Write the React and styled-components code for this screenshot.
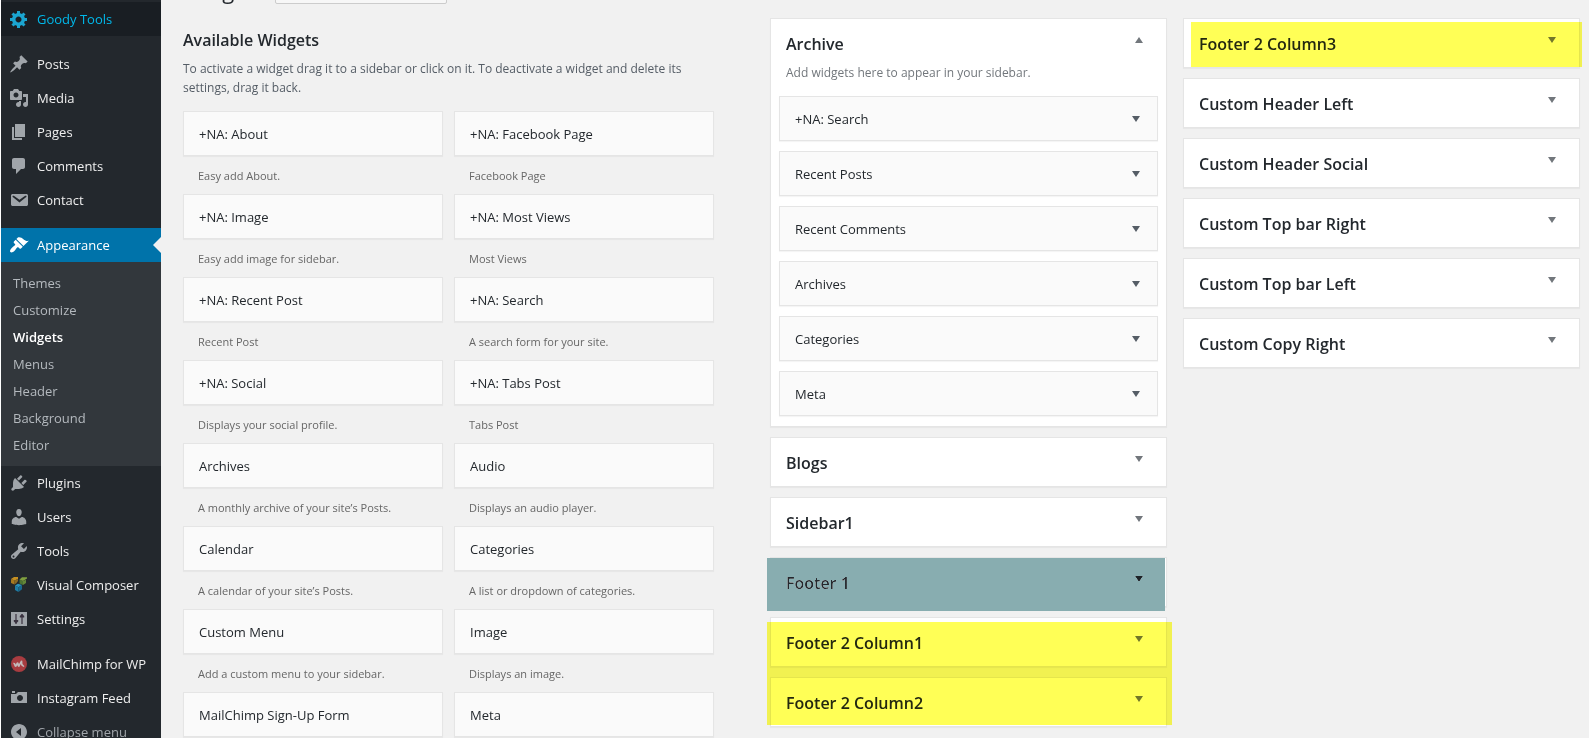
import React from "react";
import styled, { createGlobalStyle, css } from "styled-components";

const GlobalStyle = createGlobalStyle`
  *, *::before, *::after { box-sizing: border-box; }
  html, body { margin: 0; padding: 0; }
  body {
    background: #f1f1f1;
    color: #23282d;
    font-family: "Open Sans", "Noto Sans", sans-serif;
    font-size: 13px;
    line-height: 19px;
    overflow: hidden;
  }
  h1, h2, h3, p, ul { margin: 0; padding: 0; }
  ul { list-style: none; }
  button { font-family: inherit; }
`;

const Page = styled.div`
  display: flex;
  height: 100vh;
  overflow: hidden;
`;

/* ---------- Admin menu ---------- */

const Menu = styled.nav`
  flex: 0 0 161px;
  padding-top: 2px;
  background: #23282d;
  border-left: 1px solid #fff;
`;

const MenuGroup = styled.ul`
  margin-bottom: 11px;
`;

const itemLook = css`
  position: relative;
  display: flex;
  align-items: center;
  gap: 8px;
  width: 100%;
  height: 34px;
  padding: 0 0 0 8px;
  border: 0;
  font-size: 13px;
  line-height: 18px;
  text-align: left;
  text-decoration: none;
  white-space: nowrap;
`;

const tones = {
  normal: css`background: transparent; color: #eee; svg { color: #a0a5aa; }`,
  hover: css`background: #191e23; color: #00b9eb; svg { color: #1ba5d0; }`,
  current: css`
    background: #0073aa;
    color: #fff;
    svg { color: #fff; }
    &::after {
      content: "";
      position: absolute;
      right: 0;
      border: 8px solid transparent;
      border-right-color: #f1f1f1;
    }
  `,
};

const MenuLink = styled.a`
  ${itemLook}
  ${(p) => tones[p.$tone || "normal"]}
`;

const CollapseButton = styled.button`
  ${itemLook}
  background: transparent;
  color: #a0a5aa;
  cursor: pointer;
`;

const Icon = styled.svg`
  flex: none;
  width: 20px;
  height: 20px;
  fill: currentColor;
`;

const SubMenu = styled.ul`
  padding: 8px 0 7px;
  background: #32373c;
`;

const SubLink = styled.a`
  display: block;
  padding: 4px 12px;
  color: ${(p) => (p.$current ? "#fff" : "#b4b9be")};
  font-size: 13px;
  font-weight: ${(p) => (p.$current ? 600 : 400)};
  line-height: 19px;
  text-decoration: none;
`;

/* ---------- Content ---------- */

const Content = styled.main`
  flex: 1;
  min-width: 0;
  padding: 0 9px 0 22px;
`;

const TitleBar = styled.header`
  display: flex;
  align-items: flex-end;
  gap: 10px;
  height: 29px;
  margin-top: -25px;
`;

const PageTitle = styled.h1`
  font-size: 22px;
  font-weight: 400;
  line-height: 28px;
`;

const PreviewButton = styled.button`
  width: 172px;
  height: 28px;
  border: 1px solid #ccc;
  border-radius: 2px;
  background: #f7f7f7;
  color: #0073aa;
  font-size: 12px;
  font-weight: 600;
  white-space: nowrap;
`;

const Columns = styled.div`
  display: grid;
  grid-template-columns: minmax(0, 531fr) minmax(0, 810fr);
  gap: 56px;
  margin-top: 14px;
`;

const Available = styled.section`
  padding-top: 12px;
`;

const SectionTitle = styled.h2`
  font-size: 16px;
  font-weight: 600;
  line-height: 20px;
`;

const Intro = styled.p`
  margin: 9px 0 14px;
  color: #555d66;
  font-size: 12px;
`;

const WidgetGrid = styled.div`
  display: grid;
  grid-template-columns: 1fr 1fr;
  column-gap: 11px;
`;

const WidgetTile = styled.article`
  height: 83px;
`;

const WidgetBar = styled.div`
  display: flex;
  align-items: center;
  justify-content: space-between;
  height: 45px;
  padding: 1px 17px 0 15px;
  border: 1px solid #e5e5e5;
  background: #fafafa;
  box-shadow: 0 1px 1px rgba(0, 0, 0, 0.04);
`;

const WidgetName = styled.h3`
  font-size: 13px;
  font-weight: 500;
  line-height: 20px;
  white-space: nowrap;
`;

const WidgetNote = styled.p`
  padding: 10px 15px 0;
  color: #666;
  font-size: 11px;
`;

const SidebarColumns = styled.div`
  display: grid;
  grid-template-columns: 1fr 1fr;
  align-items: start;
  gap: 16px;
`;

const SidebarColumn = styled.div`
  display: flex;
  flex-direction: column;
  gap: 10px;
`;

const Panel = styled.section`
  border: 1px solid #e5e5e5;
  background: #fff;
  box-shadow: 0 1px 1px rgba(0, 0, 0, 0.04);
`;

const PanelHead = styled.div`
  display: flex;
  justify-content: space-between;
  height: 48px;
  padding: 15px 23px 0 15px;
`;

const PanelTitle = styled.h2`
  font-size: 16px;
  font-weight: 600;
  line-height: 20px;
  white-space: nowrap;
`;

const PanelBody = styled.div`
  display: flex;
  flex-direction: column;
  gap: 10px;
  padding: 0 8px 10px;
`;

const PanelNote = styled.p`
  margin: -4px 7px 4px;
  color: #72777c;
  font-size: 12px;
`;

const Toggle = styled.button`
  display: flex;
  align-items: center;
  align-self: ${(p) => (p.$top ? "flex-start" : "center")};
  height: ${(p) => (p.$top ? 12 : 10)}px;
  padding: 0;
  border: 0;
  background: transparent;
  color: ${(p) => p.$color || "#72777c"};
  cursor: pointer;

  svg {
    width: 8px;
    height: 6px;
    fill: currentColor;
  }
`;

/* Marker-pen tint laid over one or more panels */
const Marked = styled.div`
  position: relative;
  display: flex;
  flex-direction: column;
  gap: 10px;

  &::after {
    content: "";
    position: absolute;
    inset: ${(p) => p.$inset};
    background: ${(p) => p.$tint};
    mix-blend-mode: ${(p) => p.$blend || "multiply"};
    pointer-events: none;
  }
`;

/* ---------- Data ---------- */

const paths = {
  gear: "M18 12h-2.18c-.17.7-.44 1.35-.81 1.93l1.54 1.54-2.1 2.1-1.54-1.54c-.58.36-1.23.63-1.91.79V19H8v-2.18c-.68-.16-1.33-.43-1.91-.79l-1.54 1.54-2.12-2.12 1.54-1.54c-.36-.58-.63-1.23-.79-1.91H1V9.03h2.17c.16-.7.44-1.35.8-1.94L2.43 5.55l2.1-2.1 1.54 1.54c.58-.37 1.24-.64 1.93-.81V2h3v2.18c.68.16 1.33.43 1.91.79l1.54-1.54 2.12 2.12-1.54 1.54c.36.59.64 1.24.8 1.94H18V12zm-8.5 1.5c1.66 0 3-1.34 3-3s-1.34-3-3-3-3 1.34-3 3 1.34 3 3 3z",
  pin: "M10.44 3.02l1.82-1.82 6.36 6.35-1.83 1.82c-1.05-.68-2.48-.57-3.41.36l-.75.75c-.92.93-1.04 2.35-.35 3.41l-1.83 1.82-2.41-2.41-2.8 2.79c-.42.42-3.38 2.71-3.8 2.29s1.86-3.39 2.28-3.81l2.79-2.79L4.1 9.36l1.83-1.82c1.05.69 2.48.57 3.4-.36l.75-.75c.93-.92 1.05-2.35.36-3.41z",
  media: "M13 11V4c0-.55-.45-1-1-1h-1.67L9 1H5L3.67 3H2c-.55 0-1 .45-1 1v7c0 .55.45 1 1 1h10c.55 0 1-.45 1-1zM7 4.5c1.38 0 2.5 1.12 2.5 2.5S8.38 9.5 7 9.5 4.5 8.38 4.5 7 5.62 4.5 7 4.5zM14 6h5v10.5c0 1.38-1.12 2.5-2.5 2.5S14 17.88 14 16.5s1.12-2.5 2.5-2.5c.17 0 .34.02.5.05V9h-3V6zm-4 8.05V13h2v3.5c0 1.38-1.12 2.5-2.5 2.5S7 17.88 7 16.5 8.12 14 9.5 14c.17 0 .34.02.5.05z",
  pages: "M6 15V2h10v13H6zm-1 1h8v2H3V5h2v11z",
  comment: "M5 2h9c1.1 0 2 .9 2 2v7c0 1.1-.9 2-2 2h-2l-5 5v-5H5c-1.1 0-2-.9-2-2V4c0-1.1.9-2 2-2z",
  mail: "M3.87 4h13.25C18.37 4 19 4.59 19 5.79v8.42c0 1.19-.63 1.79-1.88 1.79H3.87c-1.25 0-1.88-.6-1.88-1.79V5.79c0-1.2.63-1.79 1.88-1.79zm6.62 8.6l6.74-5.53c.24-.2.43-.66.13-1.07-.29-.41-.82-.42-1.17-.17l-5.7 3.86L4.8 5.83c-.35-.25-.88-.24-1.17.17-.3.41-.11.87.13 1.07z",
  brush: "M14.48 11.06L7.41 3.99l1.5-1.5c.5-.56 2.3-.47 3.51.32 1.21.8 1.43 1.28 2.91 2.1 1.18.64 2.45 1.26 4.45.85zm-.71.71L6.7 4.7 4.93 6.47c-.39.39-.39 1.02 0 1.41l1.06 1.06c.39.39.39 1.03 0 1.42-.6.6-1.43 1.11-2.21 1.69-.35.26-.7.53-1.01.84C1.43 14.23.4 16.08 1.4 17.07c.99 1 2.84-.03 4.18-1.36.31-.31.58-.66.85-1.02.57-.78 1.08-1.61 1.69-2.21.39-.39 1.02-.39 1.41 0l1.06 1.06c.39.39 1.02.39 1.41 0z",
  plug: "M13.11 4.36L9.87 7.6 8 5.73l3.24-3.24c.35-.34 1.05-.2 1.56.32.52.51.66 1.21.31 1.55zm-8 1.77l.91-1.12 9.01 9.01-1.19.84c-.71.71-2.63 1.16-3.82 1.16H6.14L4.9 17.26c-.59.59-1.54.59-2.12 0-.59-.58-.59-1.53 0-2.12l1.24-1.24v-3.88c0-1.13.4-3.19 1.09-3.89zm7.26 3.97l3.24-3.24c.34-.35 1.04-.21 1.55.31.52.51.66 1.21.31 1.55l-3.24 3.25z",
  user: "M10 9.25c-2.27 0-2.73-3.44-2.73-3.44C7 4.02 7.82 2 9.97 2c2.16 0 2.98 2.02 2.71 3.81 0 0-.41 3.44-2.68 3.44zm0 2.57L12.72 10c2.39 0 4.52 2.33 4.52 4.53v2.49s-3.65 1.13-7.24 1.13c-3.65 0-7.24-1.13-7.24-1.13v-2.49c0-2.25 1.94-4.48 4.47-4.48z",
  wrench: "M16.68 9.77c-1.34 1.34-3.3 1.67-4.95.99l-5.41 6.52c-.99.99-2.59.99-3.58 0s-.99-2.59 0-3.57l6.52-5.42c-.68-1.65-.35-3.61.99-4.95 1.28-1.28 3.12-1.62 4.72-1.06l-2.89 2.89 2.82 2.82 2.86-2.87c.53 1.58.18 3.39-1.08 4.65zM3.81 16.21c.4.39 1.04.39 1.43 0 .4-.4.4-1.04 0-1.43-.39-.4-1.03-.4-1.43 0-.39.39-.39 1.03 0 1.43z",
  camera: "M6 5V3H3v2h3zm12 10V4H9L7 6H2v9h16zm-7-8c1.66 0 3 1.34 3 3s-1.34 3-3 3-3-1.34-3-3 1.34-3 3-3z",
  collapse: "M10 2c4.42 0 8 3.58 8 8s-3.58 8-8 8-8-3.58-8-8 3.58-8 8-8zm2 12V6l-5 4z",
};

const drawings = {
  sliders: (
    <>
      <path d="M2 3h16v14H2z" />
      <path stroke="#3a3340" strokeWidth="1.2" d="M7 5v10M13 5v10" />
      <path fill="#3a3340" d="M4.800 11h4.400v1.500L7 14.500l-2.200-2zM10.800 8.500V7L13 5l2.200 2v1.500z" />
    </>
  ),
  composer: (
    <>
      <path fill="#a87a20" d="M2 4l3.500 1.500v4L2 8z" />
      <path fill="#c48f22" d="M2 4l3-2h4v2L5.500 5.500z" />
      <path fill="#8d6a24" d="M5.500 5.500L9 4v2L7.500 8l-2 1.500z" />
      <path fill="#4f7533" d="M10.500 4.500L14 6v4l-3.500-1.500z" />
      <path fill="#7f9f3f" d="M10.500 4.500L13 2.200h5v1.300L14 6z" />
      <path fill="#64883a" d="M14 6l3-1.300V8l-3 2z" />
      <path fill="#2a93bd" d="M6 10.500L9 8.700l4 1.300-3.500 2.300z" />
      <path fill="#1f7da6" d="M6 10.500l3.500 1.800V17L6 15z" />
      <path fill="#1a6a90" d="M9.500 12.300L13 10v4.200L9.500 17z" />
    </>
  ),
  chimp: (
    <>
      <circle cx="10" cy="10" r="8" fill="#a83c40" />
      <path
        fill="#c3b9ba"
        d="M4 8.800l2 .2.700 1.500L8 8.200l1.300.3.700 1.500 2-3.500 1.300.3.200 3.200 2 2.200-1 .8-2.200-1.500-.5-1.500-1.500 3-1.200-.2-.9-1.600-1 1.800-1.400-.2z"
      />
    </>
  ),
};

const menuGroups = [
  [{ label: "Goody Tools", icon: "gear", tone: "hover" }],
  [
    { label: "Posts", icon: "pin" },
    { label: "Media", icon: "media" },
    { label: "Pages", icon: "pages" },
    { label: "Comments", icon: "comment" },
    { label: "Contact", icon: "mail" },
  ],
  [
    {
      label: "Appearance",
      icon: "brush",
      tone: "current",
      children: ["Themes", "Customize", "Widgets", "Menus", "Header", "Background", "Editor"],
    },
    { label: "Plugins", icon: "plug" },
    { label: "Users", icon: "user" },
    { label: "Tools", icon: "wrench" },
    { label: "Visual Composer", icon: "composer" },
    { label: "Settings", icon: "sliders" },
  ],
  [
    { label: "MailChimp for WP", icon: "chimp" },
    { label: "Instagram Feed", icon: "camera" },
  ],
];

const widgets = [
  ["+NA: About", "Easy add About."],
  ["+NA: Facebook Page", "Facebook Page"],
  ["+NA: Image", "Easy add image for sidebar."],
  ["+NA: Most Views", "Most Views"],
  ["+NA: Recent Post", "Recent Post"],
  ["+NA: Search", "A search form for your site."],
  ["+NA: Social", "Displays your social profile."],
  ["+NA: Tabs Post", "Tabs Post"],
  ["Archives", "A monthly archive of your site’s Posts."],
  ["Audio", "Displays an audio player."],
  ["Calendar", "A calendar of your site’s Posts."],
  ["Categories", "A list or dropdown of categories."],
  ["Custom Menu", "Add a custom menu to your sidebar."],
  ["Image", "Displays an image."],
  ["MailChimp Sign-Up Form", ""],
  ["Meta", ""],
];

const archiveWidgets = [
  "+NA: Search",
  "Recent Posts",
  "Recent Comments",
  "Archives",
  "Categories",
  "Meta",
];

/* ---------- Parts ---------- */

function MenuIcon({ name }) {
  return (
    <Icon viewBox="0 0 20 20" aria-hidden="true">
      {drawings[name] || <path d={paths[name]} />}
    </Icon>
  );
}

function ToggleArrow({ label, open, top, color }) {
  return (
    <Toggle type="button" aria-label={`Toggle ${label}`} aria-expanded={!!open} $top={top} $color={color}>
      <svg viewBox="0 0 8 6" aria-hidden="true">
        <path d={open ? "M0 6 4 0l4 6z" : "M0 0h8L4 6z"} />
      </svg>
    </Toggle>
  );
}

function SidebarPanel({ title, open, arrowColor, children }) {
  return (
    <Panel>
      <PanelHead>
        <PanelTitle>{title}</PanelTitle>
        <ToggleArrow label={title} open={open} top color={arrowColor} />
      </PanelHead>
      {children}
    </Panel>
  );
}

export default function App() {
  return (
    <Page>
      <GlobalStyle />
      <Menu aria-label="Main menu">
        {menuGroups.map((group) => (
          <MenuGroup key={group[0].label}>
            {group.map((item) => (
              <li key={item.label}>
                <MenuLink href="#" $tone={item.tone}>
                  <MenuIcon name={item.icon} />
                  {item.label}
                </MenuLink>
                {item.children && (
                  <SubMenu>
                    {item.children.map((child) => (
                      <li key={child}>
                        <SubLink href="#" $current={child === "Widgets"}>
                          {child}
                        </SubLink>
                      </li>
                    ))}
                  </SubMenu>
                )}
              </li>
            ))}
            {group[0].label === "MailChimp for WP" && (
              <li>
                <CollapseButton type="button">
                  <MenuIcon name="collapse" />
                  Collapse menu
                </CollapseButton>
              </li>
            )}
          </MenuGroup>
        ))}
      </Menu>

      <Content>
        <TitleBar>
          <PageTitle>Widgets</PageTitle>
          <PreviewButton type="button">Manage in Customizer</PreviewButton>
        </TitleBar>

        <Columns>
          <Available>
            <SectionTitle>Available Widgets</SectionTitle>
            <Intro>
              To activate a widget drag it to a sidebar or click on it. To deactivate a widget and
              delete its settings, drag it back.
            </Intro>
            <WidgetGrid>
              {widgets.map(([name, note]) => (
                <WidgetTile key={name}>
                  <WidgetBar>
                    <WidgetName>{name}</WidgetName>
                  </WidgetBar>
                  {note && <WidgetNote>{note}</WidgetNote>}
                </WidgetTile>
              ))}
            </WidgetGrid>
          </Available>

          <SidebarColumns>
            <SidebarColumn>
              <SidebarPanel title="Archive" open>
                <PanelBody>
                  <PanelNote>Add widgets here to appear in your sidebar.</PanelNote>
                  {archiveWidgets.map((name) => (
                    <WidgetBar key={name}>
                      <WidgetName>{name}</WidgetName>
                      <ToggleArrow label={name} color="#555d66" />
                    </WidgetBar>
                  ))}
                </PanelBody>
              </SidebarPanel>
              <SidebarPanel title="Blogs" />
              <SidebarPanel title="Sidebar1" />
              <Marked $inset="1px 2px -4px -3px" $tint="#88adb0" $blend="darken">
                <SidebarPanel title="Footer 1" arrowColor="#1c2227" />
              </Marked>
              <Marked $inset="5px -5px 2px -3px" $tint="#ffff56">
                <SidebarPanel title="Footer 2 Column1" />
                <SidebarPanel title="Footer 2 Column2" />
              </Marked>
            </SidebarColumn>
            <SidebarColumn>
              <Marked $inset="4px -2px 1px 8px" $tint="#ffff56">
                <SidebarPanel title="Footer 2 Column3" />
              </Marked>
              <SidebarPanel title="Custom Header Left" />
              <SidebarPanel title="Custom Header Social" />
              <SidebarPanel title="Custom Top bar Right" />
              <SidebarPanel title="Custom Top bar Left" />
              <SidebarPanel title="Custom Copy Right" />
            </SidebarColumn>
          </SidebarColumns>
        </Columns>
      </Content>
    </Page>
  );
}
